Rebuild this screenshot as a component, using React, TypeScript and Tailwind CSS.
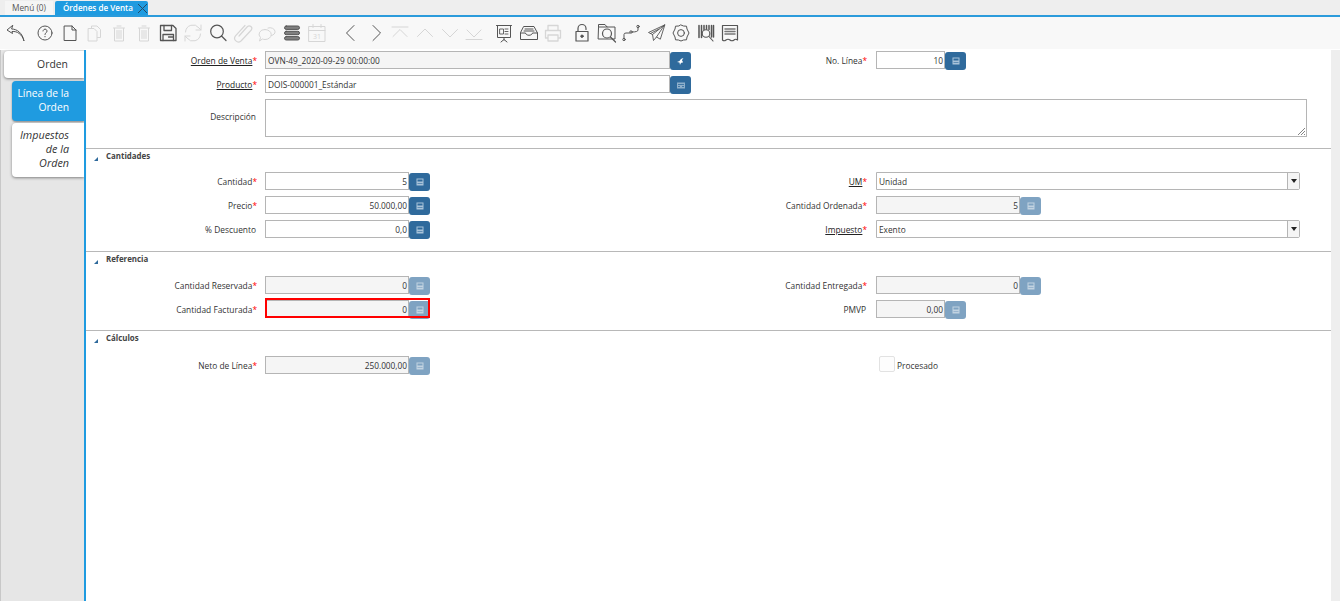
import type { ReactNode } from "react";

const font = "font-['Open_Sans','Noto_Sans',sans-serif]";

// Toolbar icon wrapper, all icons drawn on a 24 box
function Ico({ off, className = "", children }: { off?: boolean; className?: string; children: ReactNode }) {
  return (
    <div className={`w-[24.7px] h-[24px] flex items-center justify-center flex-shrink-0 ${className}`}>
      <svg
        width="24"
        height="24"
        viewBox="0 0 24 24"
        fill="none"
        stroke={off ? "#d6d6d6" : "#555555"}
        strokeWidth="1"
        strokeLinecap="round"
        strokeLinejoin="round"
      >
        {children}
      </svg>
    </div>
  );
}

function Toolbar() {
  return (
    <div className="h-[32px] bg-[#f8f8f8] flex items-center pl-[3px] flex-shrink-0">
      <Ico className="mr-[5px]">
        <path d="M9.5 4.5 L4 9 L9.5 12.5 L9 10.5 C14 10 19 13 21 20 C19.5 12 14 8 9 8 Z" />
      </Ico>
      <Ico>
        <circle cx="12" cy="12" r="7" />
        <path d="M10 10 a2 2 0 1 1 3 1.8 c-.8.5-1 .9-1 1.7 M12 15.4 v.4" />
      </Ico>
      <Ico>
        <path d="M6.5 5 h7.5 L18 9 V19.5 H6.5 Z M14 5 V9 H18" />
      </Ico>
      <Ico off>
        <path d="M9.5 7 V5 h5.5 l3.5 3.5 V16.5 h-3 M6.5 7.5 h5.5 l3 3 V20 H6.5 Z" />
      </Ico>
      <Ico off>
        <path d="M7.5 7.5 V20 H16.5 V7.5 M6.5 7 H17.5 M10 5 H14 M10 9.5 V17.5 M12 9.5 V17.5 M14 9.5 V17.5" />
      </Ico>
      <Ico off>
        <path d="M7.5 7.5 V20 H16.5 V7.5 M6.5 7 H17.5 M10 5 H14 M10 9.5 V17.5 M12 9.5 V17.5 M14 9.5 V17.5" />
      </Ico>
      <Ico>
        <path d="M4.5 4.5 H17 L20 7.5 V19.5 H4.5 Z" strokeWidth="1.3" />
        <path d="M8 4.5 V9.5 H15.5 V4.5 M7 19.5 V13.5 H17.5 V19.5 M12.5 16 H17.5" strokeWidth="1.3" />
      </Ico>
      <Ico off>
        <path d="M4.5 11 A7.5 7.5 0 0 1 18 7 L20 9 M20 4 V9 H15 M19.5 13 A7.5 7.5 0 0 1 6 17 L4 15 M4 20 V15 H9" />
      </Ico>
      <Ico>
        <circle cx="11" cy="10.5" r="6.3" strokeWidth="1.2" />
        <path d="M15.5 15 L20 19.5" strokeWidth="1.2" />
      </Ico>
      <Ico off>
        <path d="M8 15 L16.5 5.5 a2.6 2.6 0 0 1 3.8 3.5 L10 20 a3.8 3.8 0 0 1-5.5-5.2 L14 4.5" strokeWidth="1.2" />
      </Ico>
      <Ico off>
        <path d="M13 7 a5 4 0 0 1 7 3.5 a5 4 0 0 1-3.5 4" />
        <path d="M10 8.5 a6 4.8 0 0 1 0 10 c-1 0-2-.2-2.6-.5 L4.5 20 l1-3.5 A5.6 4.8 0 0 1 10 8.5 Z" />
      </Ico>
      <Ico>
        <rect x="4.5" y="5" width="15" height="3.4" rx="1.7" fill="#808080" />
        <rect x="4.5" y="10.3" width="15" height="3.4" rx="1.7" fill="#808080" />
        <rect x="4.5" y="15.6" width="15" height="3.4" rx="1.7" fill="#808080" />
      </Ico>
      <Ico off>
        <path d="M4 5.5 H20 V20.5 H4 Z M4 9.5 H20 M8 3.5 V6.5 M16 3.5 V6.5" />
        <text x="12" y="18" fontSize="7" textAnchor="middle" fill="#d6d6d6" stroke="none" fontFamily="Open Sans">31</text>
      </Ico>
      <Ico className="ml-[9.6px]">
        <path d="M15 4.5 L7.5 12 L15 19.5" />
      </Ico>
      <Ico>
        <path d="M9 4.5 L16.5 12 L9 19.5" />
      </Ico>
      <Ico off>
        <path d="M4 6 H20 M5 15.5 L12 8.5 L19 15.5" />
      </Ico>
      <Ico off>
        <path d="M4.5 15.5 L12 8 L19.5 15.5" />
      </Ico>
      <Ico off>
        <path d="M4.5 8.5 L12 16 L19.5 8.5" />
      </Ico>
      <Ico off>
        <path d="M4 18.5 H20 M5 9 L12 16 L19 9" />
      </Ico>
      <Ico className="ml-[5px]">
        <path d="M4.5 4.5 H19.5 M5.5 4.5 V16.5 H18.5 V4.5 M12 16.5 V19 M9 21 L12 18.5 L15 21" />
        <path d="M8 8 H11.5 V13 H8 Z M13 8 H16 M13 10.5 H16 M13 13 H16" strokeWidth="0.9" />
      </Ico>
      <Ico>
        <path d="M7 5.5 H17 L20.5 12 V18.5 H3.5 V12 Z M3.5 12 H8.5 C9 15 15 15 15.5 12 H20.5 M8 8 H16 M7 10 H17" />
      </Ico>
      <Ico off>
        <path d="M7 9.5 V4.5 H17 V9.5 M4.5 9.5 H19.5 V17 H17 M7 17 H4.5 V9.5 M7 14 H17 V20 H7 Z" strokeWidth="1.3" />
      </Ico>
      <Ico className="ml-[4px]">
        <path d="M8 10 V7.5 a4 4 0 0 1 8 0 V8.5" strokeWidth="1.2" />
        <rect x="6" y="10.5" width="12" height="9.5" strokeWidth="1.2" />
        <circle cx="12" cy="15.2" r="1.2" fill="#555555" />
      </Ico>
      <Ico>
        <path d="M3.5 6.5 V3.5 H10 L12 6 H20 V18 H3.5 Z M3.5 6 H12" />
        <circle cx="12" cy="12.5" r="4.5" strokeWidth="1.2" />
        <path d="M15.5 16 L20.5 21" strokeWidth="1.2" />
      </Ico>
      <Ico>
        <circle cx="19" cy="5.5" r="1.2" />
        <circle cx="5" cy="18.5" r="1.2" />
        <circle cx="12" cy="11" r="1.2" />
        <path d="M5 17.3 V13.5 Q5 12 7 12 H10.8 M13.2 11 Q19 11 19 9 V6.7" />
      </Ico>
      <Ico>
        <path d="M20.5 4 L4.5 11.5 L8.5 13.5 L9.5 19.5 L12.5 16 L16 18 Z M20.5 4 L8.5 13.5 M20.5 4 L12.5 16 M6.5 12.5 L15 8" strokeWidth="0.9" />
      </Ico>
      <Ico>
        <path d="M12 4 L14.5 5 L17.5 5.2 L18 8 L20 12 L18 16 L17.5 18.8 L14.5 19 L12 20 L9.5 19 L6.5 18.8 L6 16 L4 12 L6 8 L6.5 5.2 L9.5 5 Z" />
        <circle cx="12" cy="12" r="3.4" />
      </Ico>
      <Ico>
        <path d="M5 4.5 V16.5 M7.5 4.5 V16.5 M10 4.5 V8.5 M12.5 4.5 V8 M15 4.5 V8.5 M17.5 4.5 V16 M19.5 4.5 V16" strokeWidth="1.5" />
        <circle cx="12" cy="12.5" r="3.8" strokeWidth="1.1" />
        <path d="M15 15.5 L19 20" strokeWidth="1.1" />
      </Ico>
      <Ico>
        <path d="M4.5 4.5 H19.5 V19 Q17.5 17.5 16 19 Q14 20.5 12 19 Q10 17.5 8 19 Q6 20.5 4.5 19 Z" strokeWidth="1.2" />
        <path d="M7 8 H17 M7 10.5 H17 M7 13 H17" strokeWidth="1.5" stroke="#777" />
      </Ico>
    </div>
  );
}

function SideTabs() {
  return (
    <aside className="w-[84px] flex-shrink-0 bg-[#e6e6e6] border-l border-[#c8c8c8] flex flex-col items-end pt-[1px] text-[#333]">
      <div className="w-[80px] h-[27px] bg-white rounded-l-[4px] shadow-[0_1px_3px_rgba(0,0,0,0.45)] flex items-center justify-end pr-[16px] text-[10.4px]">
        Orden
      </div>
      <div className="w-[72px] h-[40px] mt-[3px] bg-[#1f9be0] text-white rounded-l-[4px] shadow-[0_1px_2px_rgba(0,0,0,0.4)] text-[10.3px] leading-[14px] text-right pr-[15px] pt-[5px]">
        Línea de la<br />Orden
      </div>
      <div className="w-[72px] h-[54px] mt-[2px] bg-white rounded-l-[4px] shadow-[0_1px_3px_rgba(0,0,0,0.45)] text-[10.8px] leading-[14px] italic text-right pr-[15px] pt-[5px]">
        Impuestos<br />de la<br />Orden
      </div>
    </aside>
  );
}

function Label({ text, link, req = true }: { text: string; link?: boolean; req?: boolean }) {
  return (
    <div className={`text-right text-[#333] text-[8.4px] whitespace-nowrap pt-[4px] ${req ? "pr-[1px]" : "pr-[2px]"}`}>
      <span className={link ? "underline text-[#222]" : ""}>{text}</span>
      {req && <span className="text-[#f00]">*</span>}
    </div>
  );
}

function Btn({ off, icon = "calc" }: { off?: boolean; icon?: "calc" | "back" | "prod" }) {
  return (
    <div
      className={`w-[21px] h-[18px] mt-[1px] rounded-[3px] flex items-center justify-center flex-shrink-0 ${
        off ? "bg-[#7fa3c2]" : "bg-[#2f6a9c]"
      }`}
    >
      {icon === "calc" && (
        <svg width="8" height="8" viewBox="0 0 8 8" fill="none">
          <rect x="0.5" y="0.5" width="7" height="7" fill={off ? "#c2d3e1" : "#a9c3d9"} />
          <rect x="1.5" y="1.5" width="5" height="2" fill={off ? "#7fa3c2" : "#2f6a9c"} />
          <path d="M1.5 5.5 H6.5" stroke={off ? "#7fa3c2" : "#2f6a9c"} strokeWidth="0.6" />
        </svg>
      )}
      {icon === "back" && (
        <svg width="9" height="9" viewBox="0 0 9 9">
          <path d="M7.5 1 C5 1.5 4 3 3.5 4 L1 5 L3.5 5.5 L4 8 C4.5 6 5.5 5.5 7 5.5 L7 4.5 C6 4.5 5.5 3 7.5 1 Z" fill="#fff" />
        </svg>
      )}
      {icon === "prod" && (
        <svg width="10" height="9" viewBox="0 0 10 9" fill="none">
          <rect x="1" y="1.5" width="8" height="6" fill="#8fb0cb" />
          <path d="M2 3.5 H8 M2 5.5 H4 M6 5.5 H8" stroke="#2f6a9c" strokeWidth="0.8" />
        </svg>
      )}
    </div>
  );
}

function Num({ w, value, off, error }: { w: string; value: string; off?: boolean; error?: boolean }) {
  return (
    <div className="relative flex items-start w-fit">
      <div
        className={`${w} h-[18px] border border-[#b5b5b5] px-[1px] text-right text-[8.3px] leading-[18px] text-[#333] ${
          off ? "bg-[#f5f5f5]" : "bg-white"
        }`}
      >
        {value}
      </div>
      <Btn off={off} />
      {error && <div className="absolute left-0 right-0 top-[-2px] h-[20px] border-2 border-[#f00]" />}
    </div>
  );
}

function Text({ value, off, icon }: { value: string; off?: boolean; icon: "back" | "prod" }) {
  return (
    <div className="flex items-start">
      <div
        className={`w-[405px] h-[18px] border border-[#b5b5b5] px-[2px] text-[8.3px] leading-[18px] text-[#333] ${
          off ? "bg-[#f5f5f5]" : "bg-white"
        }`}
      >
        {value}
      </div>
      <Btn icon={icon} />
    </div>
  );
}

function Select({ value }: { value: string }) {
  return (
    <div className="w-[424px] h-[18px] border border-[#b5b5b5] rounded-r-[2px] bg-white flex text-[8.3px] leading-[18px] text-[#333]">
      <div className="flex-1 px-[2px]">{value}</div>
      <div className="w-[12px] border-l border-[#b5b5b5] bg-[#f5f5f5] flex items-center justify-center">
        <span className="w-0 h-0 border-l-[3px] border-r-[3px] border-t-[4px] border-l-transparent border-r-transparent border-t-[#222]" />
      </div>
    </div>
  );
}

// Four column row shared by every block of the form
function Row({ children }: { children: ReactNode }) {
  return <div className="grid grid-cols-[172px_438px_172px_1fr] h-[19px] items-start">{children}</div>;
}

function Section({ title }: { title: string }) {
  return (
    <div className="border-t border-[#b8b8b8] flex items-center h-[15px]">
      <svg width="4" height="4" viewBox="0 0 4 4" className="ml-[8px] mr-[8px] mt-[6px]">
        <path d="M4 0 V4 H0 Z" fill="#2f6a9c" />
      </svg>
      <span className="text-[7.9px] font-bold text-[#444] pt-[2px]">{title}</span>
    </div>
  );
}

export default function App() {
  return (
    <div className={`${font} w-[1340px] h-[601px] overflow-hidden flex flex-col bg-white`}>
      {/* Tabs */}
      <div className="h-[15px] bg-[#eeeeee] flex items-end pl-[5px] gap-[2px] flex-shrink-0">
        <div className="w-[48px] h-[14px] bg-[#f5f5f5] text-[8.3px] leading-[14px] text-center text-[#555]">Menú (0)</div>
        <div className="w-[93px] h-[14px] bg-[#1f9be0] text-white text-[8.1px] font-semibold leading-[14px] pl-[8px] flex items-center justify-between rounded-t-[2px]">
          Órdenes de Venta
          <svg width="11" height="11" viewBox="0 0 11 11" stroke="#244a66" strokeWidth="1">
            <path d="M1 1 L10 10 M10 1 L1 10" />
          </svg>
        </div>
      </div>
      <div className="h-[2px] bg-[#2b9bdb] flex-shrink-0" />

      <Toolbar />

      <div className="flex-1 flex min-h-0 mt-[1px]">
        <SideTabs />
        <main className="flex-1 border-l-[2px] border-[#1f9be0] flex">
          <div className="w-[1245px]">
            <div className="pt-[1px] pb-[11px] flex flex-col gap-[5px]">
              <Row>
                <Label text="Orden de Venta" link />
                <div className="pl-[7px]"><Text value="OVN-49_2020-09-29 00:00:00" off icon="back" /></div>
                <Label text="No. Línea" />
                <div className="pl-[8px]"><Num w="w-[69px]" value="10" /></div>
              </Row>
              <Row>
                <Label text="Producto" link />
                <div className="pl-[7px]"><Text value="DOIS-000001_Estándar" icon="prod" /></div>
              </Row>
              <div className="flex items-center">
                <div className="w-[172px] pb-[6px]"><Label text="Descripción" req={false} /></div>
                <div className="ml-[7px] w-[1042px] h-[38px] border border-[#b5b5b5] relative">
                  <svg width="9" height="9" viewBox="0 0 9 9" stroke="#666" strokeWidth="0.8" className="absolute right-[0px] bottom-[0px]">
                    <path d="M1 8 L8 1 M4 8 L8 4 M7 8 L8 7" />
                  </svg>
                </div>
              </div>
            </div>

            <Section title="Cantidades" />
            <div className="pt-[9px] pb-[12px] flex flex-col gap-[5px]">
              <Row>
                <Label text="Cantidad" />
                <div className="pl-[7px]"><Num w="w-[144px]" value="5" /></div>
                <Label text="UM" link />
                <div className="pl-[8px]"><Select value="Unidad" /></div>
              </Row>
              <Row>
                <Label text="Precio" />
                <div className="pl-[7px]"><Num w="w-[144px]" value="50.000,00" /></div>
                <Label text="Cantidad Ordenada" />
                <div className="pl-[8px]"><Num w="w-[144px]" value="5" off /></div>
              </Row>
              <Row>
                <Label text="% Descuento" req={false} />
                <div className="pl-[7px]"><Num w="w-[144px]" value="0,0" /></div>
                <Label text="Impuesto" link />
                <div className="pl-[8px]"><Select value="Exento" /></div>
              </Row>
            </div>

            <Section title="Referencia" />
            <div className="pt-[10px] pb-[11px] flex flex-col gap-[5px]">
              <Row>
                <Label text="Cantidad Reservada" />
                <div className="pl-[7px]"><Num w="w-[144px]" value="0" off /></div>
                <Label text="Cantidad Entregada" />
                <div className="pl-[8px]"><Num w="w-[144px]" value="0" off /></div>
              </Row>
              <Row>
                <Label text="Cantidad Facturada" />
                <div className="pl-[7px]"><Num w="w-[144px]" value="0" off error /></div>
                <Label text="PMVP" req={false} />
                <div className="pl-[8px]"><Num w="w-[69px]" value="0,00" off /></div>
              </Row>
            </div>

            <Section title="Cálculos" />
            <div className="pt-[11px]">
              <Row>
                <Label text="Neto de Línea" />
                <div className="pl-[7px]"><Num w="w-[144px]" value="250.000,00" off /></div>
                <div />
                <div className="pl-[11px] flex items-start gap-[2px]">
                  <span className="w-[16px] h-[16px] border border-[#e2e2e2] rounded-[2px] bg-[#fdfdfd]" />
                  <span className="text-[8.4px] text-[#333] pt-[4px]">Procesado</span>
                </div>
              </Row>
            </div>
          </div>
          <div className="flex-1 bg-[#eeeeee]" />
        </main>
      </div>
    </div>
  );
}
